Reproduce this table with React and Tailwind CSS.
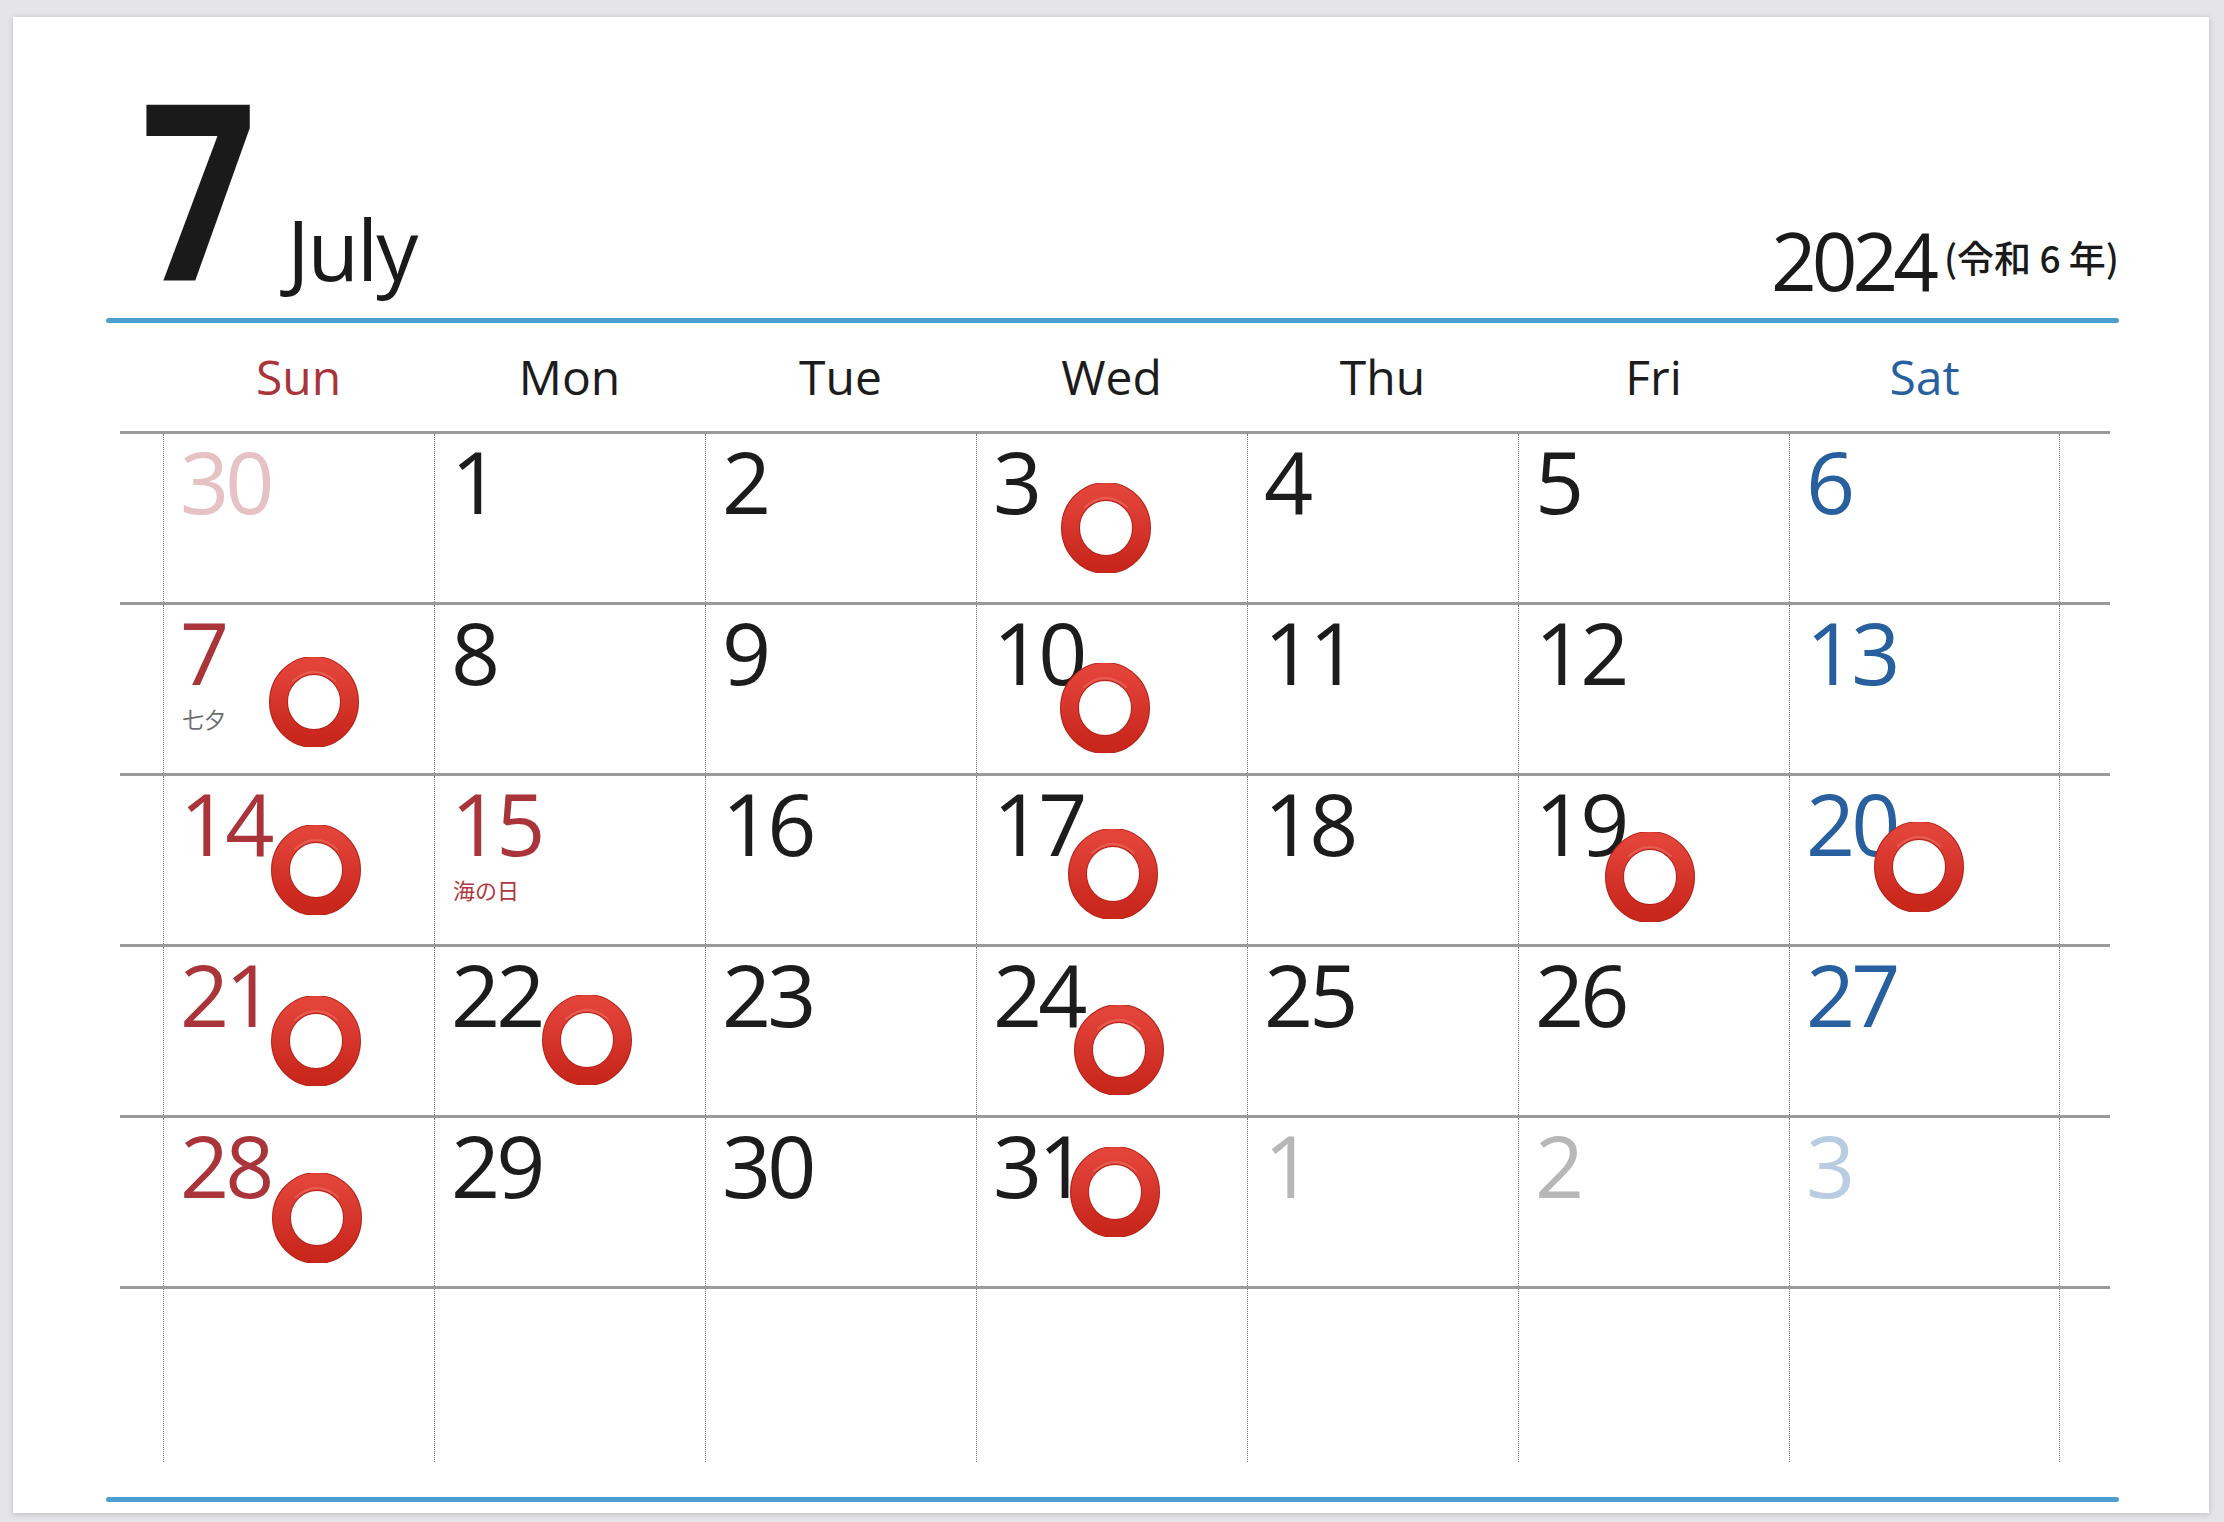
import React from "react";

const tone = {
  reg: "text-[#1c1c1c]",
  sun: "text-[#a9343a]",
  sat: "text-[#28609f]",
  fadeSun: "text-[#e6c2c4]",
  fadeGray: "text-[#b7b7b7]",
  fadeSat: "text-[#b9cce1]",
};

const weeks = [
  [
    { d: 30, t: "fadeSun" },
    { d: 1 },
    { d: 2 },
    { d: 3, mark: "left-[84px] top-[49px]" },
    { d: 4 },
    { d: 5 },
    { d: 6, t: "sat" },
  ],
  [
    { d: 7, t: "sun", label: "七夕", labelTone: "text-[#6f6f6f]", mark: "left-[105px] top-[52px]" },
    { d: 8 },
    { d: 9 },
    { d: 10, mark: "left-[83px] top-[58px]" },
    { d: 11 },
    { d: 12 },
    { d: 13, t: "sat" },
  ],
  [
    { d: 14, t: "sun", mark: "left-[107px] top-[49px]" },
    { d: 15, t: "sun", label: "海の日", labelTone: "text-[#b0393e]" },
    { d: 16 },
    { d: 17, mark: "left-[91px] top-[53px]" },
    { d: 18 },
    { d: 19, mark: "left-[86px] top-[56px]" },
    { d: 20, t: "sat", mark: "left-[84px] top-[46px]" },
  ],
  [
    { d: 21, t: "sun", mark: "left-[107px] top-[49px]" },
    { d: 22, mark: "left-[107px] top-[48px]" },
    { d: 23 },
    { d: 24, mark: "left-[97px] top-[58px]" },
    { d: 25 },
    { d: 26 },
    { d: 27, t: "sat" },
  ],
  [
    { d: 28, t: "sun", mark: "left-[108px] top-[55px]" },
    { d: 29 },
    { d: 30 },
    { d: 31, mark: "left-[93px] top-[29px]" },
    { d: 1, t: "fadeGray" },
    { d: 2, t: "fadeGray" },
    { d: 3, t: "fadeSat" },
  ],
];

const days = [
  { n: "Sun", c: "text-[#a9343a]" },
  { n: "Mon", c: "text-[#1c1c1c]" },
  { n: "Tue", c: "text-[#1c1c1c]" },
  { n: "Wed", c: "text-[#1c1c1c]" },
  { n: "Thu", c: "text-[#1c1c1c]" },
  { n: "Fri", c: "text-[#1c1c1c]" },
  { n: "Sat", c: "text-[#28609f]" },
];

// red ring stamp, like the ⭕ emoji
const Ring = ({ className }) => (
  <svg viewBox="0 0 90 90" className={"absolute w-[90px] h-[90px] " + className}>
    <defs>
      <linearGradient id="ringFill" x1="0" y1="0" x2="0" y2="1">
        <stop offset="0" stopColor="#e3443a" />
        <stop offset="1" stopColor="#c9261c" />
      </linearGradient>
    </defs>
    <ellipse cx="45" cy="45" rx="35.5" ry="36.5" fill="none" stroke="#b52217" strokeWidth="19" />
    <ellipse cx="45" cy="45" rx="35.5" ry="36.5" fill="none" stroke="url(#ringFill)" strokeWidth="17" />
    <path d="M24 24 Q45 6 66 24" fill="none" stroke="#f07a70" strokeWidth="2" strokeLinecap="round" opacity="0.5" />
  </svg>
);

const Cell = ({ cell, last }) => (
  <div
    className={
      "relative w-[271px] h-full border-l border-dotted border-[#7a7a7a] pl-[16px] pt-[4px] " +
      (last ? "border-r" : "")
    }
  >
    {cell && (
      <>
        <div className={"text-[86px] leading-none font-medium tracking-[-4px] " + tone[cell.t || "reg"]}>
          {cell.d}
        </div>
        {cell.label && (
          <div
            className={
              "mt-[12px] ml-[2px] text-[22px] leading-none font-['Noto_Sans_CJK_JP',sans-serif] " + cell.labelTone
            }
          >
            {cell.label}
          </div>
        )}
        {cell.mark && <Ring className={cell.mark} />}
      </>
    )}
  </div>
);

export default function App() {
  return (
    <div className="w-[2224px] h-[1522px] bg-[#e4e4e9] pt-[17px] pl-[13px] font-['Open_Sans','Noto_Sans_CJK_JP',sans-serif]">
      <div className="w-[2196px] h-[1496px] bg-white shadow-[0_1px_6px_rgba(0,0,0,0.18)] flex flex-col">
        {/* title */}
        <div className="h-[301px] flex items-end justify-between">
          <div className="flex items-baseline ml-[116px] mb-[9px]">
            <span className="w-[158px] inline-block text-[246px] leading-none font-bold text-[#1a1a1a] scale-x-[0.82] origin-left translate-x-[12px]">
              7
            </span>
            <span className="text-[84px] leading-none font-medium text-[#1a1a1a] tracking-[-2px]">July</span>
          </div>
          <div className="flex items-end mr-[90px] mb-[18px] text-[#1a1a1a]">
            <span className="text-[80px] leading-none font-medium tracking-[-5px]">2024</span>
            <span className="ml-[10px] mb-[24px] text-[37px] leading-none font-['Noto_Sans_CJK_JP',sans-serif] font-medium">
              (令和 6 年)
            </span>
          </div>
        </div>
        <div className="ml-[93px] mr-[90px] h-[5px] rounded-full bg-[#4d9fd0]" />

        {/* grid */}
        <div className="ml-[107px] w-[1990px]">
          <div className="h-[108px] flex pl-[43px] pt-[30px]">
            {days.map((d) => (
              <div key={d.n} className={"w-[271px] text-center text-[48px] leading-none font-medium " + d.c}>
                {d.n}
              </div>
            ))}
          </div>
          {weeks.map((w, i) => (
            <div key={i} className="h-[171px] border-t-[3px] border-[#9a9a9a] flex pl-[43px]">
              {w.map((c, j) => (
                <Cell key={j} cell={c} last={j === 6} />
              ))}
            </div>
          ))}
          <div className="h-[176px] border-t-[3px] border-[#9a9a9a] flex pl-[43px]">
            {days.map((d, j) => (
              <Cell key={d.n} last={j === 6} />
            ))}
          </div>
        </div>

        <div className="mt-[35px] ml-[93px] mr-[90px] h-[5px] rounded-full bg-[#4d9fd0]" />
      </div>
    </div>
  );
}
